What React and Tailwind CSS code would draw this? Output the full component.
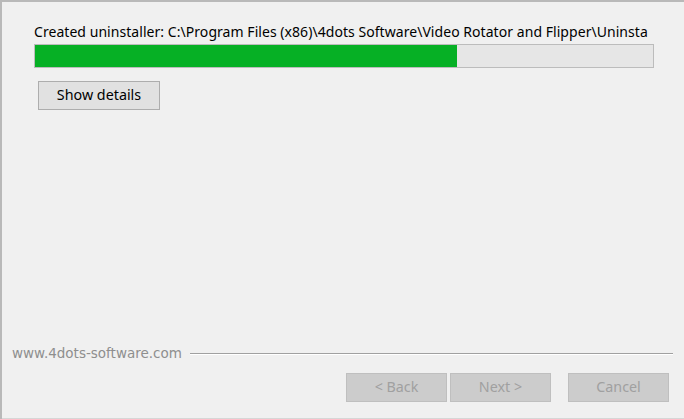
export default function App() {
  return (
    <div
      className="w-[684px] h-[419px] bg-[#f0f0f0] border-t-2 border-l-2 border-[#b9b9b9] flex flex-col overflow-hidden"
      style={{ fontFamily: '"Noto Sans", "Open Sans", sans-serif' }}
    >
      {/* Progress area */}
      <div className="flex-1 pl-[32px] pr-[28px] pt-[21px]">
        <div className="w-[620px] h-[18px] whitespace-nowrap text-[14px] tracking-[0.05px] leading-[18px] text-[#000]">
          Created uninstaller: C:\Program Files (x86)\4dots Software\Video Rotator and Flipper\Uninsta
        </div>
        <div className="mt-[3px] w-[620px] h-[24px] border border-[#bcbcbc] bg-[#e6e6e6]">
          <div className="h-full bg-[#06b025]" style={{ width: "68.3%" }} />
        </div>
        <button className="mt-[13px] ml-[4px] w-[122px] h-[29px] bg-[#e1e1e1] border border-[#adadad] text-[14.3px] leading-none text-[#000]">
          Show details
        </button>
      </div>

      {/* Footer */}
      <div className="h-[74px] border-b border-[#d6d6d6]">
        <div className="flex items-center h-[18px] pl-[10px] pr-[11px]">
          <span
            className="text-[13.5px] leading-none text-[#8e8e8e] whitespace-nowrap"
            style={{ fontFamily: '"DejaVu Sans", Verdana, sans-serif' }}
          >
            www.4dots-software.com
          </span>
          <div className="flex-1 ml-[8px] h-[2px] border-t border-[#a0a0a0] border-b border-b-white" />
        </div>
        <div className="flex mt-[10px] pl-[344px]">
          <button disabled className="w-[101px] h-[29px] bg-[#cccccc] border border-[#bfbfbf] text-[14.3px] leading-none text-[#a0a0a0]">
            &lt; Back
          </button>
          <button disabled className="ml-[3px] w-[101px] h-[29px] bg-[#cccccc] border border-[#bfbfbf] text-[14.3px] leading-none text-[#a0a0a0]">
            Next &gt;
          </button>
          <button disabled className="ml-[17px] w-[101px] h-[29px] bg-[#cccccc] border border-[#bfbfbf] text-[14.3px] leading-none text-[#a0a0a0]">
            Cancel
          </button>
        </div>
      </div>
    </div>
  );
}
